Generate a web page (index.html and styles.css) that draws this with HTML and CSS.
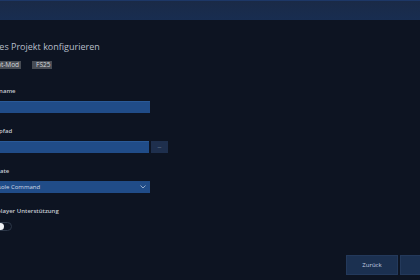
FILE: index.html
```html
<!DOCTYPE html>
<html lang="de">
<head>
<meta charset="utf-8">
<link rel="stylesheet" href="styles.css">
</head>
<body>
<div class="titlebar"></div>
<main class="content">
  <h1 class="title">Neues Projekt konfigurieren</h1>
  <div class="tags">
    <span class="tag">Script-Mod</span>
    <span class="tag">FS25</span>
  </div>
  <div class="field first">
    <label class="label">Skriptname</label>
    <div class="input"></div>
  </div>
  <div class="field">
    <label class="label">Skriptpfad</label>
    <div class="row">
      <div class="input grow"></div>
      <button class="browse">…</button>
    </div>
  </div>
  <div class="field">
    <label class="label">Template</label>
    <div class="select">
      <span>Console Command</span>
      <svg class="chev" width="6" height="4" viewBox="0 0 6 4"><polyline points="0.5,0.5 3,3 5.5,0.5" fill="none" stroke="#9fb3cf" stroke-width="0.9"/></svg>
    </div>
  </div>
  <div class="field">
    <label class="label">Multiplayer Unterstützung</label>
    <div class="toggle"><span class="knob"></span></div>
  </div>
</main>
<footer class="footer">
  <button class="btn">Zurück</button>
  <button class="btn wide">Erstellen</button>
</footer>
</body>
</html>
```

FILE: styles.css
```css
html, body {
  margin: 0;
  padding: 0;
}
body {
  width: 420px;
  height: 280px;
  overflow: hidden;
  background: #0d1422;
  font-family: "Open Sans", "Noto Sans", sans-serif;
  display: flex;
  flex-direction: column;
}
.titlebar {
  height: 19px;
  flex: none;
  border-top: 1px solid #1d3766;
  background: linear-gradient(180deg, #1a2a47 0%, #182d50 100%);
}
.content {
  margin-left: -18px;
  width: 188px;
  display: flex;
  flex-direction: column;
}
.title {
  margin: 20px 0 0 0;
  font-size: 9px;
  line-height: 14px;
  font-weight: 400;
  color: #b8bfcb;
  white-space: nowrap;
}
.tags {
  margin-top: 7px;
  display: flex;
  gap: 11px;
}
.tag {
  height: 8px;
  line-height: 8px;
  font-size: 6.5px;
  padding: 0 2px 0 4px;
  background: #474c54;
  color: #d4d6da;
}
.field {
  display: flex;
  flex-direction: column;
  gap: 6px;
  margin-top: 14px;
}
.field.first {
  margin-top: 18px;
}
.label {
  font-size: 6px;
  line-height: 8px;
  font-weight: 600;
  color: #c4c9d2;
  white-space: nowrap;
}
.input {
  width: 168px;
  height: 12px;
  background: #204c88;
  box-sizing: border-box;
  border-top: 1px solid #2a5a98;
}
.row {
  display: flex;
  gap: 2px;
  align-items: stretch;
}
.grow {
  width: 167px;
}
.browse {
  width: 17px;
  height: 12px;
  padding: 0 0 2px 0;
  border: none;
  background: #1e2f4d;
  color: #9fb0c8;
  font-family: "Open Sans", sans-serif;
  font-size: 5px;
  line-height: 10px;
}
.select {
  width: 168px;
  height: 12px;
  background: #204c88;
  display: flex;
  align-items: center;
  justify-content: space-between;
  padding: 0 4px 0 5px;
  box-sizing: border-box;
  font-size: 6px;
  color: #d2dae6;
  white-space: nowrap;
}
.chev {
  display: block;
}
.toggle {
  margin-top: 1px;
  width: 30px;
  height: 9px;
  border-radius: 5px;
  box-sizing: border-box;
  border: 1px solid #2c3748;
  display: flex;
  align-items: center;
}
.knob {
  width: 7px;
  height: 7px;
  border-radius: 50%;
  background: #eef0f3;
  margin-left: 14px;
}
.footer {
  margin-top: auto;
  margin-right: -60px;
  margin-bottom: 5px;
  display: flex;
  justify-content: flex-end;
  gap: 2px;
}
.btn {
  width: 52px;
  height: 20px;
  padding: 0;
  border: 1px solid #23395b;
  background: #1b3050;
  color: #c6d1e0;
  font-family: "Open Sans", sans-serif;
  font-size: 6px;
}
.btn.wide {
  width: 80px;
}
```
